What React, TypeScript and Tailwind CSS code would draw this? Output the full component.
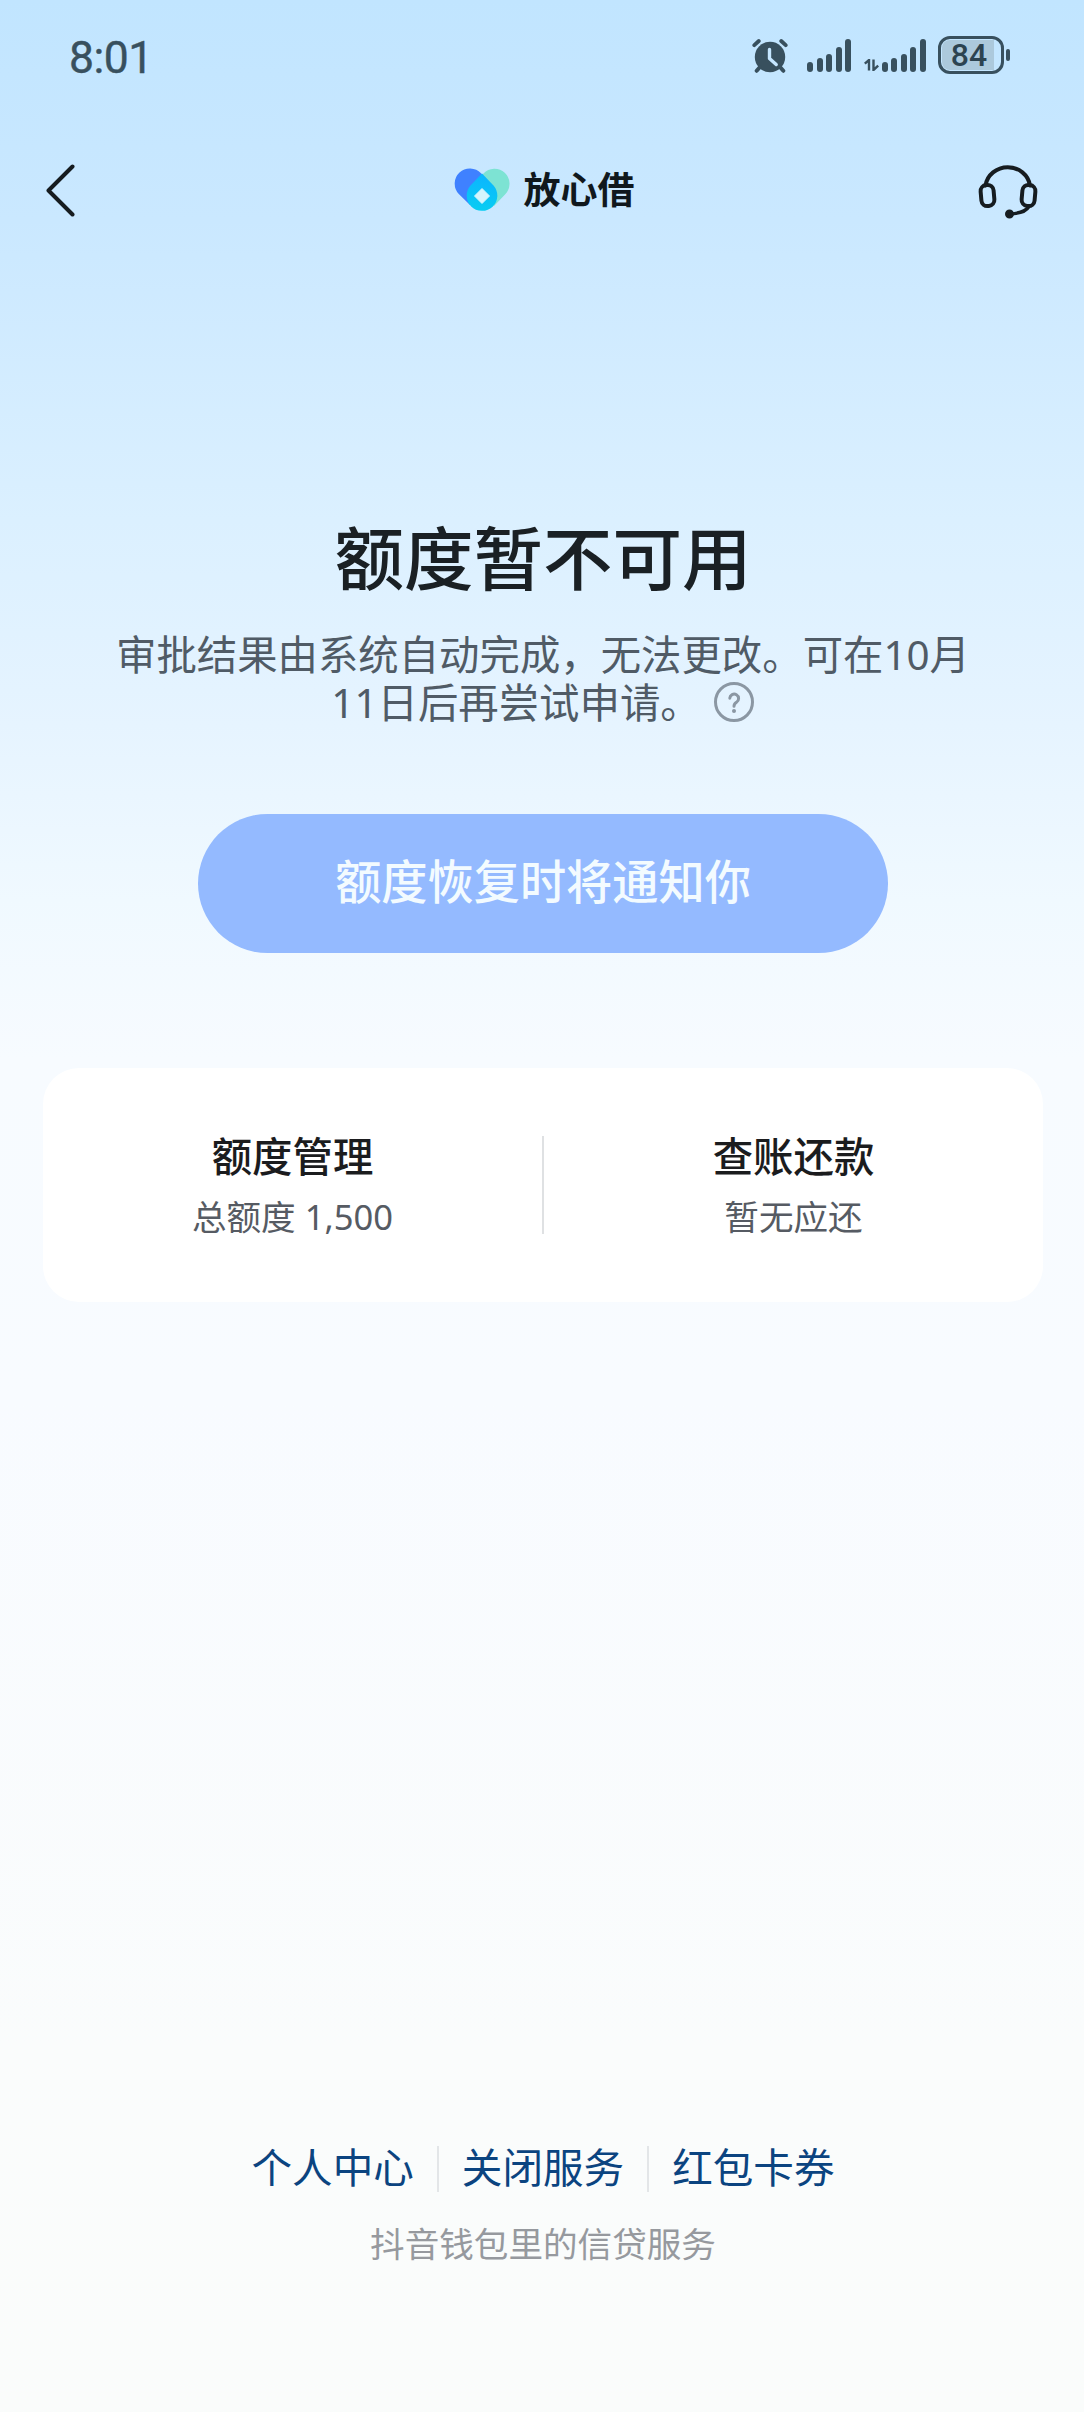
import React from "react";

const bars = [10, 14, 18, 25, 33];

function Signal() {
  return (
    <div className="flex h-[34px] items-end gap-[3.4px]">
      {bars.map((h) => (
        <span key={h} className="w-[6px] rounded-full bg-[#38505e]" style={{ height: h }} />
      ))}
    </div>
  );
}

function AlarmIcon() {
  return (
    <svg className="relative left-[1px]" width="36" height="36" viewBox="0 0 36 36" fill="none" stroke="#38505e" strokeLinecap="round">
      <circle cx="18" cy="19" r="15.2" fill="#38505e" stroke="none" />
      <path d="M2.3 7.2 6.8 3M33.7 7.2 29.2 3" strokeWidth="3.8" />
      <path d="M8 29l-3.3 3.8M28 29l3.3 3.8" strokeWidth="4" />
      <path d="M17.500 11.500v9l6.700 6" stroke="#c5e6ff" strokeWidth="3.400" strokeLinejoin="round" />
    </svg>
  );
}

function StatusBar() {
  return (
    <div className="flex h-[112px] items-center justify-between pl-[69px] pr-[74px] text-[#38505e]">
      <div className="pt-[3px] font-['Roboto'] text-[44.5px] leading-[54px] tracking-[-0.5px] [-webkit-text-stroke:0.4px_#38505e]">8:01</div>
      <div className="mb-[2px] flex h-[38px] items-end">
        <AlarmIcon />
        <div className="mb-[2px] ml-[20px]">
          <Signal />
        </div>
        <svg className="ml-[13px] mb-[3px]" width="15" height="12" viewBox="0 0 15 12" fill="none" stroke="#38505e" strokeWidth="2.4">
          <path d="M.8 4.6 5 1v10.5M9.5 .5V11l4.7-4.4" />
        </svg>
        <div className="mb-[2px] ml-[3px]">
          <Signal />
        </div>
        <div className="ml-[12px] flex items-center gap-[2.5px]">
          <div className="flex h-[38px] w-[66px] rounded-[12px] border-[3px] border-[#38505e] p-[1px]">
            <div className="flex w-[52px] items-center justify-center rounded-l-[8px] bg-[#acc9dc]">
              <span className="ml-[3px] font-['Roboto'] text-[32px] font-medium leading-none text-[#2c4350]">84</span>
            </div>
          </div>
          <span className="h-[12px] w-[4px] rounded-full bg-[#38505e]" />
        </div>
      </div>
    </div>
  );
}

function Logo() {
  return (
    <svg width="56" height="44" viewBox="0 0 56 44">
      <defs>
        <linearGradient id="drop" x1="0" y1="0" x2="0" y2="1">
          <stop offset="0" stopColor="#0bb4ff" />
          <stop offset="1" stopColor="#08cdf2" />
        </linearGradient>
      </defs>
      <path d="M29.500 5.500A15 15 0 0 1 51.500 26L40 38 18 17z" fill="#7de3d3" />
      <path d="M4.800 26A15.200 15.200 0 0 1 27 5.200L38 17 16 37z" fill="#3f81ff" />
      <path d="M28 5.500 39.500 17.400A15.500 15.500 0 0 1 38.600 38.700 15.500 15.500 0 0 1 17 38.200 15.500 15.500 0 0 1 16.500 17.400z" fill="url(#drop)" />
      <path d="M28 20.500 35.500 28 28 35.500 20.500 28z" fill="#d4f5fd" stroke="#d4f5fd" strokeWidth="1" strokeLinejoin="round" />
    </svg>
  );
}

function Header() {
  return (
    <header className="flex h-[156px] items-center justify-between pl-[44px] pr-[44px]">
      <svg className="h-[54px] w-[64px]" viewBox="0 0 64 54" fill="none" stroke="#161c20" strokeWidth="4" strokeLinecap="round" strokeLinejoin="round">
        <path d="M28.500 3.500 4.500 27.500 28.500 51.500" />
      </svg>
      <div className="ml-[4px] flex items-center gap-[14px]">
        <Logo />
        <span className="mb-[1px] text-[37px] font-bold leading-[44px] text-[#10181d]">放心借</span>
      </div>
      <svg className="h-[58px] w-[64px]" viewBox="0 0 64 58" fill="none" stroke="#161c20" strokeWidth="4" strokeLinecap="round">
        <path d="M9.500 24.500A22.500 21.500 0 0 1 54 24.500" />
        <rect x="5" y="24" width="13" height="21" rx="6" transform="rotate(-5 11.500 34.500)" />
        <rect x="46" y="24" width="13" height="21" rx="6" transform="rotate(5 52.500 34.500)" />
        <path d="M52.500 46Q49 52 34 53" strokeWidth="3.500" />
        <circle cx="33.500" cy="53" r="3" fill="#161c20" strokeWidth="3" />
      </svg>
    </header>
  );
}

function CardCell({ title, detail }: { title: string; detail: React.ReactNode }) {
  return (
    <div className="flex flex-1 flex-col items-center pt-[2px]">
      <div className="text-[40.4px] font-medium leading-[60px] text-[#1b1c1e]">{title}</div>
      <div className="text-[34.6px] leading-[59px] text-[#565b63]">{detail}</div>
    </div>
  );
}

const links = ["个人中心", "关闭服务", "红包卡券"];

export default function App() {
  return (
    <div className="flex h-[2412px] w-[1084px] flex-col bg-[linear-gradient(180deg,#c1e5ff_0px,#cae8ff_220px,#dbf0ff_520px,#e4f3ff_690px,#f0f9ff_900px,#f7fbff_1060px,#f8fbff_1400px,#fafcfc_2050px,#fafcfb_2412px)] font-['Noto_Sans','Noto_Sans_CJK_SC',sans-serif]">
      <StatusBar />
      <Header />
      <main className="flex flex-1 flex-col items-center pl-[2px]">
        <h1 className="mt-[250px] text-[69.5px] font-medium leading-[80px] text-[#1a2024]">额度暂不可用</h1>
        <div className="mt-[33px] flex flex-col items-center text-[40.4px] leading-[48px] text-[#505b66]">
          <p>审批结果由系统自动完成，无法更改。可在10月</p>
          <p className="flex items-center">
            11日后再尝试申请。
            <svg className="mb-[2px] ml-[12px]" width="42" height="42" viewBox="0 0 42 42" fill="none" stroke="#8b97a3" strokeWidth="3">
              <circle cx="21" cy="21" r="18.500" />
              <path d="M16.800 17.200a4.400 4.400 0 1 1 6.700 4c-1.700 1.100-2.500 2-2.500 4.100" strokeLinecap="round" />
              <circle cx="21" cy="30" r="2" fill="#8b97a3" stroke="none" />
            </svg>
          </p>
        </div>
        <button className="mt-[87px] h-[139px] w-[690px] rounded-full bg-[#94baff] pb-[4px] text-[46.200px] font-medium leading-[60px] text-[#f3fbff]">
          额度恢复时将通知你
        </button>
        <section className="mt-[115px] flex h-[234px] w-[1000px] items-center rounded-[36px] bg-white">
          <CardCell title="额度管理" detail="总额度 1,500" />
          <div className="h-[98px] w-[2px] bg-[#dfe1e3]" />
          <CardCell title="查账还款" detail="暂无应还" />
        </section>
        <footer className="mt-auto flex flex-col items-center pb-[142px]">
          <nav className="flex items-center">
            {links.map((label, i) => (
              <React.Fragment key={label}>
                {i > 0 && <span className="mx-[23px] h-[46px] w-[2px] bg-[#e3e6e8]" />}
                <a className="pb-[2px] text-[40.600px] leading-[58px] text-[#0b4480]">{label}</a>
              </React.Fragment>
            ))}
          </nav>
          <div className="mt-[19px] text-[34.600px] leading-[52px] text-[#96999e]">抖音钱包里的信贷服务</div>
        </footer>
      </main>
    </div>
  );
}
